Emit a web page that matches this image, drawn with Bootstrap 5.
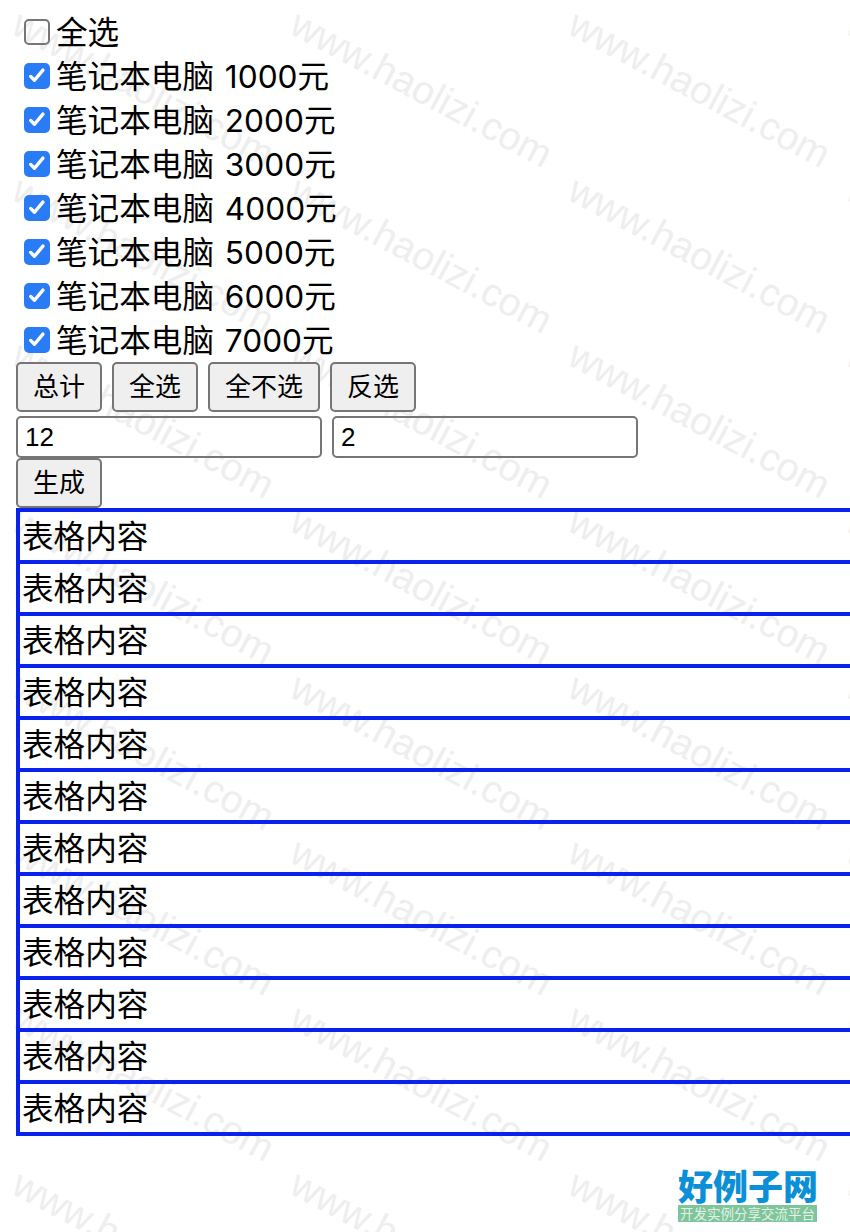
<!DOCTYPE html>
<html lang="zh-CN">
<head>
<meta charset="utf-8">
<title>全选</title>
<link href="https://cdn.jsdelivr.net/npm/bootstrap@5.3.0/dist/css/bootstrap.min.css" rel="stylesheet">
<style>
html,body{height:1232px;overflow:hidden;background:#fff}
body{font-family:"Liberation Sans","Noto Sans CJK SC",sans-serif;color:#000;position:relative;padding:10px 0 0 16px;font-size:31.6px}
.wm-layer{position:absolute;left:0;top:0;width:850px;height:1232px;overflow:hidden;padding:7px 0 0 4px;display:grid;grid-template-columns:repeat(4,278px);grid-auto-rows:165.7px;pointer-events:none;z-index:0}
.wm-item{display:flex;align-items:center;justify-content:center;white-space:nowrap;font-size:39.2px;color:#eeeeee;transform:rotate(28deg)}
.page-flow{position:relative;z-index:1}
.pick-row{height:44px;padding-left:8px;line-height:46px;white-space:nowrap;word-spacing:2px;font-family:Inter,"Noto Sans CJK SC",sans-serif}
.pick-row .form-check-input{width:26px;height:26px;margin:0 6px 0 0;vertical-align:-1px;border:2px solid #767676;border-radius:5px;background-color:transparent}
.pick-row .form-check-input:checked{background-color:#2a7cf6;border-color:#2a7cf6;background-size:100%;background-image:url("data:image/svg+xml,%3csvg xmlns='http://www.w3.org/2000/svg' viewBox='0 0 26 26'%3e%3cpath fill='none' stroke='%23fff' stroke-width='4' stroke-linecap='round' stroke-linejoin='round' d='M5.5 13.5l4.5 4.5 10-12'/%3e%3c/svg%3e")}
.btn-line{gap:10px!important}
.input-line{gap:10px;margin-top:4px}
.gen-line{height:50px}
.gray-btn{height:50px;padding:0 15px;font-size:26px;line-height:43px;color:#000;background:#efefef;border:2px solid #767676;border-radius:5px;--bs-btn-hover-bg:#efefef}
.num-input{width:306px;height:42px;padding:0 7px;font-size:26px;line-height:38px;color:#000;background:transparent;border:2px solid #767676;border-radius:5px}
.blue-grid{width:834px;margin:0;border-collapse:collapse;background:transparent;--bs-table-bg:transparent}
.blue-grid>tbody>tr>td{height:52px;padding:2px 0 0 2px;border:0;border-top:4px solid #0a22ee;border-left:4px solid #0a22ee;line-height:46px;font-size:31.6px;background:transparent;box-shadow:none;color:#000}
.blue-grid>tbody>tr:last-child>td{border-bottom:4px solid #0a22ee}
.site-logo{position:absolute;left:678px;top:1168px;width:139px;text-align:center;z-index:1}
.logo-name{height:37px;font-size:35px;line-height:33px;font-weight:900;color:#0b90d8;white-space:nowrap;font-family:"Noto Sans CJK SC",sans-serif}
.logo-tag{height:17px;background:#7fc49a;color:#dff2e6;font-size:13.5px;line-height:17px;white-space:nowrap;font-family:"Noto Sans CJK SC",sans-serif}
</style>
</head>
<body>
<div class="wm-layer">
<span class="wm-item">www.haolizi.com</span><span class="wm-item">www.haolizi.com</span><span class="wm-item">www.haolizi.com</span><span class="wm-item">www.haolizi.com</span>
<span class="wm-item">www.haolizi.com</span><span class="wm-item">www.haolizi.com</span><span class="wm-item">www.haolizi.com</span><span class="wm-item">www.haolizi.com</span>
<span class="wm-item">www.haolizi.com</span><span class="wm-item">www.haolizi.com</span><span class="wm-item">www.haolizi.com</span><span class="wm-item">www.haolizi.com</span>
<span class="wm-item">www.haolizi.com</span><span class="wm-item">www.haolizi.com</span><span class="wm-item">www.haolizi.com</span><span class="wm-item">www.haolizi.com</span>
<span class="wm-item">www.haolizi.com</span><span class="wm-item">www.haolizi.com</span><span class="wm-item">www.haolizi.com</span><span class="wm-item">www.haolizi.com</span>
<span class="wm-item">www.haolizi.com</span><span class="wm-item">www.haolizi.com</span><span class="wm-item">www.haolizi.com</span><span class="wm-item">www.haolizi.com</span>
<span class="wm-item">www.haolizi.com</span><span class="wm-item">www.haolizi.com</span><span class="wm-item">www.haolizi.com</span><span class="wm-item">www.haolizi.com</span>
<span class="wm-item">www.haolizi.com</span><span class="wm-item">www.haolizi.com</span><span class="wm-item">www.haolizi.com</span><span class="wm-item">www.haolizi.com</span>
</div>
<div class="page-flow">
<div class="pick-row"><input class="form-check-input" type="checkbox">全选</div>
<div class="pick-row"><input class="form-check-input" type="checkbox" checked>笔记本电脑 1000元</div>
<div class="pick-row"><input class="form-check-input" type="checkbox" checked>笔记本电脑 2000元</div>
<div class="pick-row"><input class="form-check-input" type="checkbox" checked>笔记本电脑 3000元</div>
<div class="pick-row"><input class="form-check-input" type="checkbox" checked>笔记本电脑 4000元</div>
<div class="pick-row"><input class="form-check-input" type="checkbox" checked>笔记本电脑 5000元</div>
<div class="pick-row"><input class="form-check-input" type="checkbox" checked>笔记本电脑 6000元</div>
<div class="pick-row"><input class="form-check-input" type="checkbox" checked>笔记本电脑 7000元</div>
<div class="d-flex btn-line"><button type="button" class="btn gray-btn">总计</button><button type="button" class="btn gray-btn">全选</button><button type="button" class="btn gray-btn">全不选</button><button type="button" class="btn gray-btn">反选</button></div>
<div class="d-flex input-line"><input class="form-control num-input" type="text" value="12"><input class="form-control num-input" type="text" value="2"></div>
<div class="d-flex gen-line"><button type="button" class="btn gray-btn">生成</button></div>
<table class="table blue-grid">
<tbody>
<tr><td>表格内容</td></tr><tr><td>表格内容</td></tr><tr><td>表格内容</td></tr><tr><td>表格内容</td></tr>
<tr><td>表格内容</td></tr><tr><td>表格内容</td></tr><tr><td>表格内容</td></tr><tr><td>表格内容</td></tr>
<tr><td>表格内容</td></tr><tr><td>表格内容</td></tr><tr><td>表格内容</td></tr><tr><td>表格内容</td></tr>
</tbody>
</table>
</div>
<div class="site-logo"><div class="logo-name">好例子网</div><div class="logo-tag">开发实例分享交流平台</div></div>
</body>
</html>
